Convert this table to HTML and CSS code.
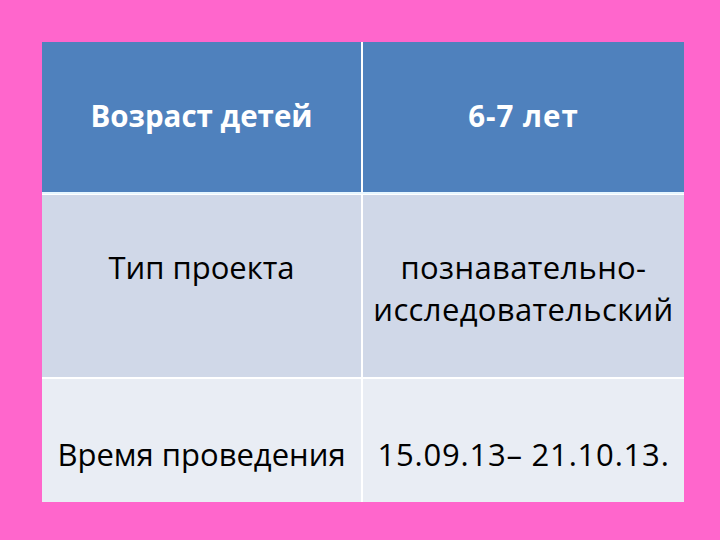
FILE: index.html
```html
<!DOCTYPE html>
<html>
<head>
<meta charset="utf-8">
<link rel="stylesheet" href="styles.css">
</head>
<body>
<div class="slide">
  <div class="table">
    <div class="cell head c1"><span>Возраст детей</span></div>
    <div class="cell head c2"><span>6-7 лет</span></div>
    <div class="cell r2 c1"><span>Тип проекта</span></div>
    <div class="cell r2 c2 wrap"><span>познавательно-<br>исследовательский</span></div>
    <div class="cell r3 c1"><span>Время проведения</span></div>
    <div class="cell r3 c2"><span>15.09.13– 21.10.13.</span></div>
  </div>
</div>
</body>
</html>
```
FILE: styles.css
```css
html, body {
  margin: 0;
  padding: 0;
}
body {
  background: #ff66cc;
  width: 720px;
  height: 540px;
  overflow: hidden;
  font-family: "Open Sans", "Noto Sans", sans-serif;
}
.slide {
  padding: 42px 0 0 42px;
}
.table {
  width: 642px;
  display: grid;
  grid-template-columns: 320px 322px;
  grid-template-rows: 152px 184px 124px;
  background: #ffffff;
}
.cell {
  box-sizing: border-box;
  display: flex;
  justify-content: center;
  text-align: center;
  font-size: 31px;
  line-height: 42px;
  color: #000;
}
.c1 { border-right: 1px solid #fff; }
.c2 {
  border-left: 1px solid #fff;
  letter-spacing: 0.8px;
}
.c2.wrap { letter-spacing: 0.35px; }
.head {
  background: #4f81bd;
  color: #fff;
  font-weight: bold;
  align-items: center;
  padding-bottom: 2px;
  border-bottom: 2px solid #e6f6ff;
  font-size: 29.5px;
  letter-spacing: 0;
}
.head.c2 { letter-spacing: 1px; }
.r2 {
  background: #d0d8e8;
  padding-top: 51px;
  border-bottom: 1px solid #fff;
  border-top: 1px solid #fff;
}
.r3 {
  background: #e9edf4;
  padding-top: 54px;
  border-top: 1px solid #fff;
}
```
